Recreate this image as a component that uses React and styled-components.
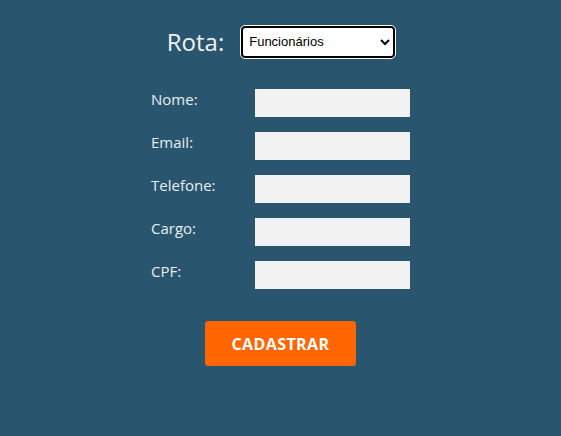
import React from 'react';
import styled, { createGlobalStyle } from 'styled-components';

const GlobalStyle = createGlobalStyle`
  html, body {
    margin: 0;
    padding: 0;
    background-color: #2a556e;
  }
  body {
    font-family: 'Open Sans', sans-serif;
  }
`;

const Page = styled.div`
  width: 561px;
  height: 436px;
  background-color: #2a556e;
  display: flex;
  flex-direction: column;
  align-items: center;
  padding-top: 25px;
  box-sizing: border-box;
`;

const RouteRow = styled.div`
  display: flex;
  align-items: center;
  gap: 17px;
  padding-left: 1px;
`;

const RouteLabel = styled.span`
  color: #f2f2f2;
  font-size: 24px;
  font-weight: 400;
  line-height: 33px;
`;

const RouteSelect = styled.select`
  width: 154px;
  height: 32px;
  background-color: #fff;
  border: 2px solid #000;
  outline: 1px solid #fff;
  border-radius: 4px;
  font-family: 'Liberation Sans', Arial, sans-serif;
  font-size: 13px;
  color: #000;
  padding: 0 2px;
`;

const Form = styled.form`
  display: flex;
  flex-direction: column;
  align-items: center;
  margin-top: 31px;
`;

const Field = styled.div`
  display: grid;
  grid-template-columns: 104px 155px;
  align-items: start;
  height: 28px;
  margin-bottom: 15px;
`;

const Label = styled.label`
  color: #e6eef2;
  font-size: 15px;
  line-height: 20px;
`;

const Input = styled.input`
  width: 155px;
  height: 28px;
  box-sizing: border-box;
  border: none;
  background-color: #f2f2f2;
  padding: 0 6px;
`;

const SubmitButton = styled.button`
  width: 151px;
  height: 45px;
  margin-top: 17px;
  background-color: #ff6600;
  color: #fff;
  border: none;
  border-radius: 3px;
  font-family: 'Open Sans', sans-serif;
  font-weight: 700;
  font-size: 16px;
  letter-spacing: 0.4px;
  cursor: pointer;
`;

const fields = ['Nome', 'Email', 'Telefone', 'Cargo', 'CPF'];

const App = () => (
  <>
    <GlobalStyle />
    <Page>
      <RouteRow>
        <RouteLabel>Rota:</RouteLabel>
        <RouteSelect defaultValue="funcionarios">
          <option value="funcionarios">Funcionários</option>
          <option value="clientes">Clientes</option>
        </RouteSelect>
      </RouteRow>
      <Form onSubmit={(e) => e.preventDefault()}>
        {fields.map((name) => (
          <Field key={name}>
            <Label>{name}:</Label>
            <Input type="text" />
          </Field>
        ))}
        <SubmitButton type="submit">CADASTRAR</SubmitButton>
      </Form>
    </Page>
  </>
);

export default App;
